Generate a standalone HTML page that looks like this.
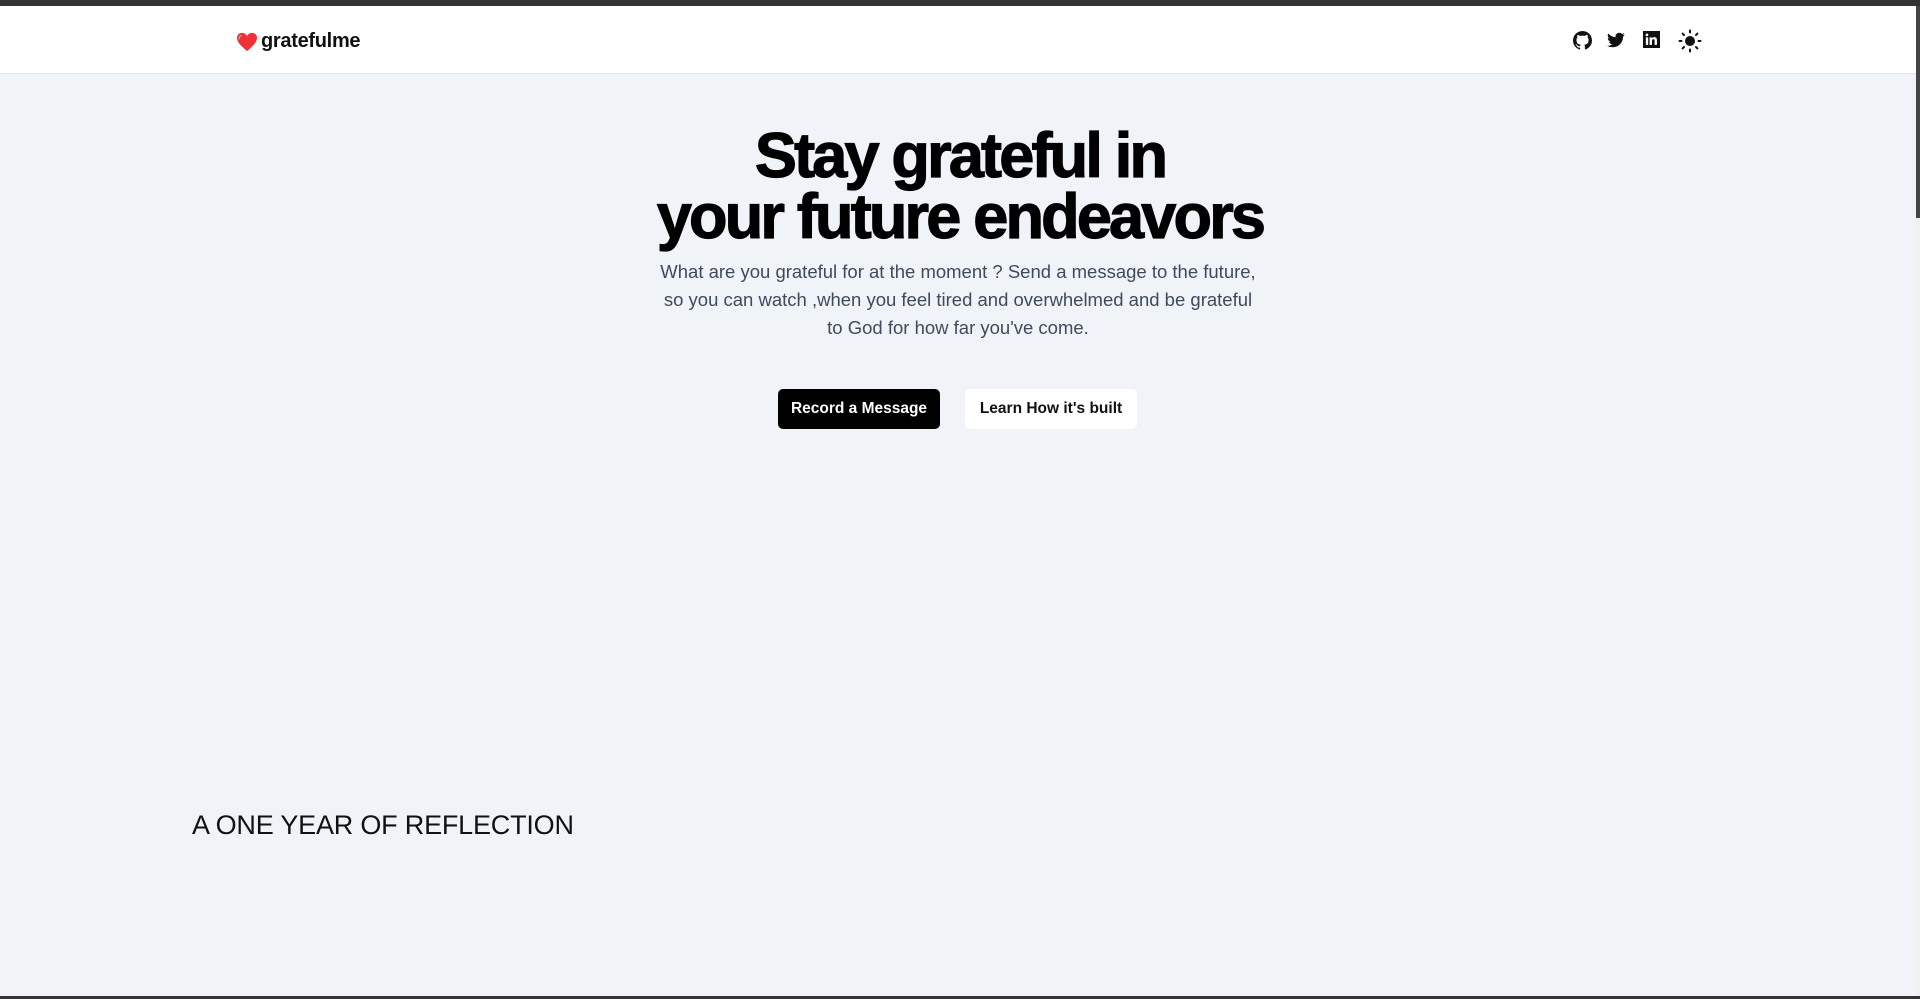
<!DOCTYPE html>
<html><head><meta charset="utf-8"><style>
*{margin:0;padding:0;box-sizing:border-box}
html,body{width:1920px;height:999px;overflow:hidden}
body{background:#f0f3f8;font-family:"Liberation Sans",sans-serif;position:relative}
.top{position:absolute;left:0;top:0;width:1920px;height:6px;background:#333}
.hdr{position:absolute;left:0;top:6px;width:1916px;height:68px;background:#fff;border-bottom:1px solid #e3e6ea}
.logo{position:absolute;left:236px;top:30px;display:flex;align-items:center;font-weight:bold;font-size:20px;color:#111;letter-spacing:-0.3px}
.icons{position:absolute;top:31px;left:1573px}
.icons svg{position:absolute;top:0}
.sb{position:absolute;right:0;top:6px;width:4px;height:993px;background:#f0f0f0}
.sb div{position:absolute;left:0;top:0;width:4px;height:212px;background:#444}
.bot{position:absolute;left:0;top:996px;width:1920px;height:3px;background:#333}
h1{position:absolute;left:460px;width:1000px;top:126px;text-align:center;font-weight:900;font-size:63px;line-height:61px;letter-spacing:-2.8px;color:#000;-webkit-text-stroke:1.2px #000}
p{position:absolute;left:655px;width:606px;top:258px;text-align:center;font-size:18.5px;line-height:28px;color:#3f4a5c}
.b{position:absolute;top:389px;height:40px;border-radius:5px;font-weight:bold;font-size:15.5px;display:flex;align-items:center;justify-content:center}
.b1{left:778px;width:162px;background:#000;color:#fff}
.b2{left:965px;width:172px;background:#fff;color:#111}
h2{position:absolute;left:192px;top:810px;font-weight:normal;font-size:27px;color:#111;letter-spacing:-0.2px}
</style></head><body>
<div class="top"></div>
<div class="hdr"></div>
<div class="logo"><svg width="22" height="20" viewBox="0 0 24 22"><path d="M12 21 C5 15 1 11 1 6.5 C1 3 3.5 1 6.5 1 C9 1 11 2.5 12 4.5 C13 2.5 15 1 17.5 1 C20.5 1 23 3 23 6.5 C23 11 19 15 12 21Z" fill="#ee3338"/><path d="M6 4 C4 4 3 6 3.5 8" stroke="#ff8a8a" stroke-width="1.5" fill="none"/></svg><span style="margin-left:3px">gratefulme</span></div>
<div class="icons">
<svg style="left:0" width="19" height="19" viewBox="0 0 16 16"><path fill="#111" d="M8 0C3.58 0 0 3.58 0 8c0 3.54 2.290 6.530 5.470 7.590.4.07.55-.17.55-.38v-1.33c-2.23.48-2.7-1.07-2.7-1.07-.36-.92-.89-1.170-.89-1.170-.73-.5.05-.49.05-.49.8.06 1.23.83 1.23.83.72 1.23 1.87.87 2.33.67.07-.52.28-.87.5-1.07-1.78-.2-3.640-.89-3.640-3.950 0-.87.31-1.59.82-2.150-.08-.2-.36-1.020.08-2.120 0 0 .67-.21 2.2.82A7.6 7.6 0 018 3.86c.68 0 1.36.09 2 .27 1.53-1.04 2.2-.82 2.2-.82.44 1.1.16 1.92.08 2.12.51.56.82 1.27.82 2.15 0 3.07-1.87 3.75-3.65 3.95.29.25.54.73.54 1.48v2.2c0 .21.15.46.55.38A8 8 0 0016 8c0-4.42-3.58-8-8-8z"/></svg>
<svg style="left:34px" width="18" height="18" viewBox="0 0 24 24"><path fill="#111" d="M23.6 4.6c-.9.4-1.8.6-2.8.8 1-.6 1.8-1.6 2.1-2.7-.9.6-2 1-3.1 1.2A4.9 4.9 0 0011.5 8.4 13.9 13.9 0 011.7 3.4a4.9 4.9 0 001.5 6.6c-.8 0-1.6-.3-2.2-.6 0 2.4 1.7 4.4 3.9 4.8-.7.2-1.5.2-2.2.1.6 2 2.4 3.4 4.6 3.4A9.9 9.9 0 010 19.5 13.9 13.9 0 007.5 21.7c9.1 0 14-7.5 14-14v-.6c1-.7 1.8-1.6 2.1-2.5z"/></svg>
<svg style="left:70px" width="17" height="17" viewBox="0 0 24 24"><path fill="#111" d="M0 0h24v24H0z"/><path fill="#fff" d="M4 9h3.3v10.5H4zM5.6 3.6a1.9 1.9 0 110 3.8 1.9 1.9 0 010-3.8zM9.3 9h3.2v1.4c.5-.8 1.5-1.7 3.2-1.7 3.4 0 4 2.2 4 5.1v5.7h-3.3v-5c0-1.2 0-2.8-1.7-2.8s-2 1.3-2 2.7v5.1H9.3z"/></svg>
<svg style="left:105px;top:-2px" width="24" height="24" viewBox="0 0 24 24"><circle cx="12" cy="12" r="5" fill="#111"/><g stroke="#111" stroke-width="2" stroke-linecap="round"><path d="M12 1.5v2M12 20.5v2M1.5 12h2M20.5 12h2M4.6 4.6l1.4 1.4M18 18l1.4 1.4M4.6 19.4L6 18M18 6l1.4-1.4"/></g></svg>
</div>
<div class="sb"><div></div></div>
<h1>Stay grateful in<br>your future endeavors</h1>
<p>What are you grateful for at the moment ? Send a message to the future, so you can watch ,when you feel tired and overwhelmed and be grateful to God for how far you've come.</p>
<div class="b b1">Record a Message</div>
<div class="b b2">Learn How it's built</div>
<h2>A ONE YEAR OF REFLECTION</h2>
<div class="bot"></div>
</body></html>
